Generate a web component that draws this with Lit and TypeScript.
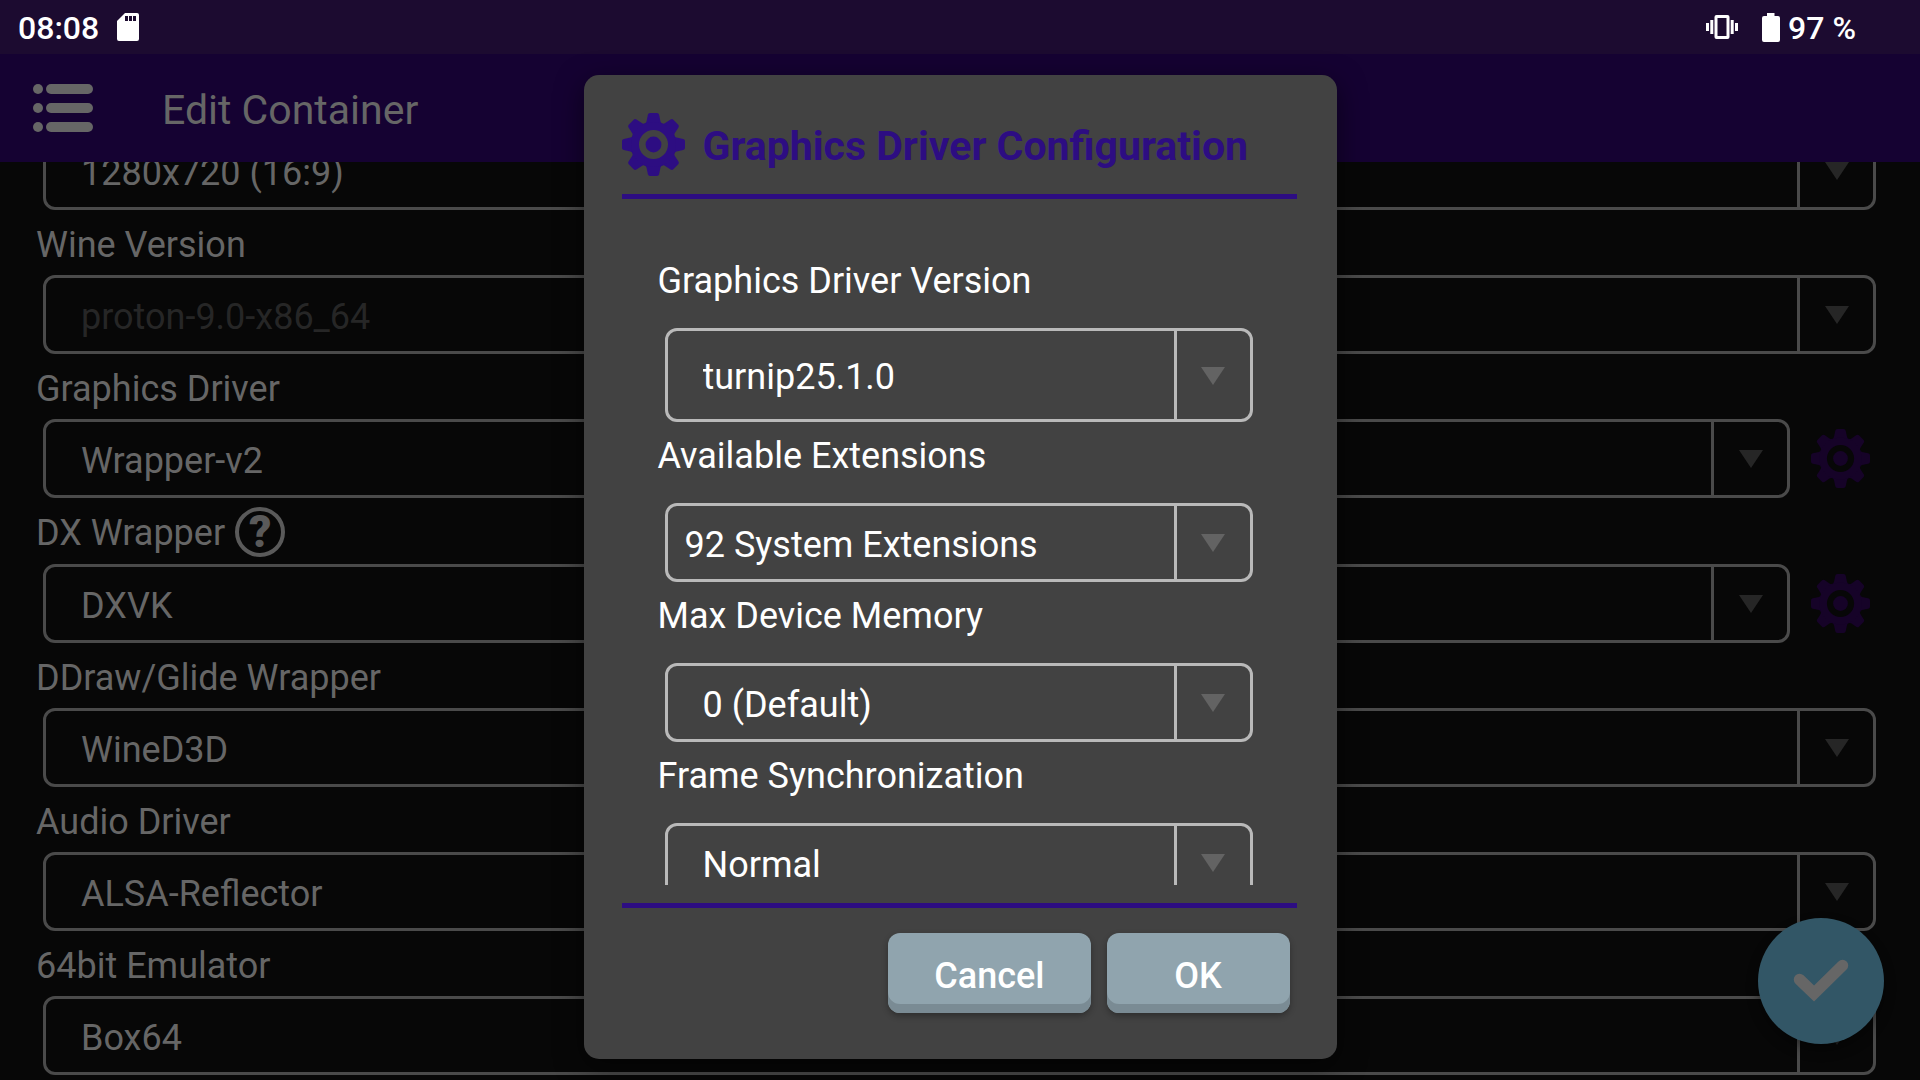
import { LitElement, html, css, svg, nothing } from "lit";
import { customElement, property } from "lit/decorators.js";

const gearTeeth = [0, 45, 90, 135, 180, 225, 270, 315];

const gearIcon = html`<svg class="gear" viewBox="0 0 63 63" aria-hidden="true">
  ${gearTeeth.map(
    (angle) => svg`<path
      transform="rotate(${angle} 31.5 31.5)"
      d="M28 0H35Q36.700 0 37.100 1.800L38.500 8.500Q38.900 10 40.600 10.600L37 15H26L22.400 10.600Q24.100 10 24.500 8.500L25.900 1.800Q26.300 0 28 0Z" />`
  )}
  <path
    fill-rule="evenodd"
    d="M31.500 9A22.500 22.500 0 1 1 31.500 54A22.500 22.500 0 1 1 31.500 9ZM31.500 17A14.500 14.500 0 1 0 31.500 46A14.500 14.500 0 1 0 31.500 17Z" />
  <circle cx="31.500" cy="31.500" r="7.900" />
</svg>`;

@customElement("drop-field")
export class DropField extends LitElement {
  @property() label = "";
  @property() value = "";
  @property({ type: Boolean }) disabled = false;
  @property({ type: Boolean }) help = false;
  @property({ type: Boolean }) config = false;
  @property({ type: Boolean }) bare = false;

  static styles = css`
    :host {
      display: block;
      font-size: 36px;
      color: var(--text);
    }
    .head {
      display: flex;
      align-items: center;
      gap: 10px;
      height: var(--label-height);
      padding: var(--label-pad);
      box-sizing: border-box;
    }
    .head.with-help {
      height: 66px;
      padding-bottom: 1px;
    }
    .help {
      width: 50px;
      height: 50px;
      padding: 0;
      border: 4px solid #5a5a5a;
      border-radius: 50%;
      background: none;
      color: #5a5a5a;
      font: 900 44px/42px Roboto, sans-serif;
      margin-bottom: 2px;
    }
    .row {
      display: flex;
      align-items: center;
      gap: 21px;
      margin-left: 7px;
    }
    .box {
      flex: 1;
      min-width: 0;
      display: grid;
      grid-template-columns: 1fr 76px;
      height: var(--box-height, 79px);
      box-sizing: border-box;
      border: 3px solid var(--line);
      border-radius: 12px;
    }
    select {
      grid-area: 1 / 1 / 2 / 3;
      appearance: none;
      width: 100%;
      border: 0;
      outline: 0;
      margin: 0;
      padding: 4px 80px 0 var(--text-inset, 35px);
      background: transparent;
      color: inherit;
      font: inherit;
      opacity: 1;
    }
    select:disabled {
      color: #262626;
    }
    .arrow {
      grid-area: 1 / 2 / 2 / 3;
      display: grid;
      place-items: center;
      padding-top: 1px;
      border-left: 3px solid var(--line);
      pointer-events: none;
    }
    .arrow svg {
      width: 24px;
      height: 18px;
      fill: var(--arrow);
    }
    .config {
      width: 59px;
      height: 59px;
      padding: 0;
      border: 0;
      background: none;
      margin-right: 6px;
    }
    .gear {
      display: block;
      width: 59px;
      height: 59px;
      fill: #160328;
    }
  `;

  render() {
    return html`
      ${this.bare
        ? nothing
        : html`<div class="head ${this.help ? "with-help" : ""}">
            <label for="choice">${this.label}</label>
            ${this.help ? html`<button class="help" type="button">?</button>` : nothing}
          </div>`}
      <div class="row">
        <div class="box">
          <select id="choice" aria-label=${this.label} ?disabled=${this.disabled}>
            <option>${this.value}</option>
          </select>
          <span class="arrow">
            <svg viewBox="0 0 24 18" aria-hidden="true"><path d="M0 0H24L12 18Z" /></svg>
          </span>
        </div>
        ${this.config
          ? html`<button class="config" type="button" aria-label="${this.label}">${gearIcon}</button>`
          : nothing}
      </div>
    `;
  }
}

@customElement("app-root")
export class AppRoot extends LitElement {
  static styles = css`
    :host {
      display: flex;
      flex-direction: column;
      height: 100vh;
      overflow: hidden;
      position: relative;
      background: #070707;
      font-family: Roboto, sans-serif;
    }
    .status {
      flex: none;
      display: flex;
      align-items: center;
      height: 54px;
      padding: 2px 64px 0 18px;
      box-sizing: border-box;
      background: #1c0b30;
      color: #fff;
      font-size: 32px;
      font-weight: 500;
    }
    .status svg {
      fill: #fff;
      margin-bottom: 2px;
    }
    .status .sd {
      width: 22px;
      height: 28px;
      margin-left: 18px;
    }
    .status .vibrate {
      width: 32px;
      height: 24px;
      margin-left: auto;
    }
    .status .battery {
      width: 18px;
      height: 29px;
      margin-left: 24px;
      margin-right: 8px;
    }
    .bar {
      flex: none;
      display: flex;
      align-items: center;
      gap: 69px;
      height: 108px;
      padding-left: 33px;
      background: #150232;
      color: #666;
    }
    .menu {
      padding: 0;
      border: 0;
      background: none;
    }
    .menu svg {
      display: block;
      width: 60px;
      height: 48px;
      fill: #666;
    }
    .bar h1 {
      margin: 0;
      padding-top: 3px;
      font-size: 41px;
      font-weight: 400;
    }
    .content {
      flex: 1;
      min-height: 0;
      overflow: hidden;
      --text: #666;
      --line: #4a4a4a;
      --arrow: #262626;
      --label-height: 65px;
      --label-pad: 4px 0 0;
    }
    .fields {
      margin-top: -31px;
      padding: 0 44px 0 36px;
    }
    .fab {
      position: absolute;
      right: 36px;
      bottom: 36px;
      width: 126px;
      height: 126px;
      padding: 0;
      border: 0;
      border-radius: 50%;
      background: #325666;
      box-shadow: 0 6px 12px rgba(0, 0, 0, 0.4);
    }
    .fab svg {
      display: block;
      fill: none;
      stroke: #666;
      stroke-width: 11.500;
      stroke-linecap: round;
    }
    .scrim {
      position: absolute;
      inset: 54px 0 0;
      display: grid;
      place-items: center;
    }
    .dialog {
      display: flex;
      flex-direction: column;
      box-sizing: border-box;
      width: min(753px, 92vw);
      height: calc(100% - 42px);
      padding: 38px 40px 46px 38px;
      border-radius: 15px;
      background: #424242;
      box-shadow: 0 8px 28px rgba(0, 0, 0, 0.5);
      color: #fff;
    }
    .dialog header {
      display: flex;
      align-items: center;
      gap: 18px;
      padding-bottom: 18px;
      border-bottom: 5px solid #2d0d82;
      color: #2d0d82;
    }
    .dialog header .gear {
      width: 63px;
      height: 63px;
      fill: #2d0d82;
    }
    .dialog h2 {
      margin: 0;
      padding-top: 3px;
      font-size: 41px;
      font-weight: 700;
    }
    .body {
      flex: 1;
      min-height: 0;
      overflow: hidden;
      margin-bottom: 18px;
      padding: 48px 44px 0 36px;
      --text: #fff;
      --line: #b9b9b9;
      --arrow: #636363;
      --label-height: 81px;
      --label-pad: 0 0 14px;
    }
    .tall {
      --box-height: 94px;
    }
    .tight {
      --text-inset: 17px;
    }
    .dialog footer {
      display: flex;
      justify-content: flex-end;
      gap: 16px;
      padding: 25px 7px 0 0;
      border-top: 5px solid #2d0d82;
    }
    .action {
      min-width: 183px;
      height: 80px;
      padding: 6px 46px 0;
      border: 0;
      border-radius: 12px;
      background: #90a4ae;
      box-shadow: inset 0 -9px 0 #7a8b94, 0 3px 6px rgba(0, 0, 0, 0.3);
      color: #fff;
      font: 500 36px Roboto, sans-serif;
    }
  `;

  render() {
    return html`
      <div class="status">
        <span>08:08</span>
        <svg class="sd" viewBox="0 0 22 28" aria-hidden="true">
          <path fill-rule="evenodd" d="M8 0H20Q22 0 22 2V26Q22 28 20 28H2Q0 28 0 26V8ZM8 3V8H11V3ZM12 3V8H15V3ZM16 3V8H19V3Z" />
        </svg>
        <svg class="vibrate" viewBox="0 0 32 24" aria-hidden="true">
          <path fill-rule="evenodd" d="M10.500 0H21.500Q23.500 0 23.500 2V22Q23.500 24 21.500 24H10.500Q8.500 24 8.500 22V2Q8.500 0 10.500 0ZM11.500 3V21H20.500V3Z" />
          <path d="M0 8H3V16H0ZM4.300 5H7.300V19H4.300ZM24.700 5H27.700V19H24.700ZM29 8H32V16H29Z" />
        </svg>
        <svg class="battery" viewBox="0 0 18 29" aria-hidden="true">
          <path d="M5 0H12.500V3H16Q18 3 18 5V27Q18 29 16 29H2Q0 29 0 27V5Q0 3 2 3H5Z" />
        </svg>
        <span>97 %</span>
      </div>

      <div class="bar">
        <button class="menu" type="button" aria-label="Menu">
          <svg viewBox="0 0 60 48" aria-hidden="true">
            ${[0, 19, 38].map(
              (y) => svg`<rect x="0" y=${y} width="10" height="10" rx="5" /><rect x="13" y=${y} width="47" height="10" rx="5" />`
            )}
          </svg>
        </button>
        <h1>Edit Container</h1>
      </div>

      <main class="content">
        <div class="fields">
          <drop-field bare label="Screen Size" value="1280x720 (16:9)"></drop-field>
          <drop-field label="Wine Version" value="proton-9.0-x86_64" disabled></drop-field>
          <drop-field label="Graphics Driver" value="Wrapper-v2" config></drop-field>
          <drop-field label="DX Wrapper" value="DXVK" help config></drop-field>
          <drop-field label="DDraw/Glide Wrapper" value="WineD3D"></drop-field>
          <drop-field label="Audio Driver" value="ALSA-Reflector"></drop-field>
          <drop-field label="64bit Emulator" value="Box64"></drop-field>
        </div>
      </main>

      <button class="fab" type="button" aria-label="Save">
        <svg viewBox="0 0 126 126" aria-hidden="true"><path d="M41.500 61.500L56 75.500L84.500 47.500" /></svg>
      </button>

      <div class="scrim">
        <section class="dialog" role="dialog" aria-labelledby="dialog-title">
          <header>
            ${gearIcon}
            <h2 id="dialog-title">Graphics Driver Configuration</h2>
          </header>
          <div class="body">
            <drop-field class="tall" label="Graphics Driver Version" value="turnip25.1.0"></drop-field>
            <drop-field class="tight" label="Available Extensions" value="92 System Extensions"></drop-field>
            <drop-field label="Max Device Memory" value="0 (Default)"></drop-field>
            <drop-field label="Frame Synchronization" value="Normal"></drop-field>
          </div>
          <footer>
            <button class="action" type="button">Cancel</button>
            <button class="action" type="button">OK</button>
          </footer>
        </section>
      </div>
    `;
  }
}
